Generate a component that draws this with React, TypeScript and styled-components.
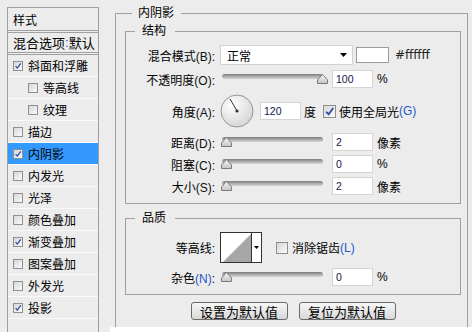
import React from "react";
import styled, { createGlobalStyle } from "styled-components";

const Global = createGlobalStyle`
  html, body { margin: 0; padding: 0; background: #fff; }
  body {
    font-family: "Liberation Sans", "Noto Sans CJK SC", sans-serif;
    font-size: 12px;
    color: #000;
  }
`;

const BG = "#ececec";
const LINE = "#a0a0a0";

const Dialog = styled.div`
  display: flex;
  align-items: flex-start;
  width: 472px;
  height: 332px;
`;

/* ---------- left style list ---------- */
const Sidebar = styled.div`
  flex: none;
  width: 110px;
  height: 332px;
  box-sizing: border-box;
  padding: 7px 0 0 7px;
  background: ${BG};
`;

const StyleList = styled.ul`
  list-style: none;
  margin: 0;
  padding: 0;
  width: 92px;
  height: 325px;
  box-sizing: border-box;
  border: 1px solid ${LINE};
  border-bottom: none;
`;

const ListHeader = styled.li<{ $h: number; $size: number }>`
  display: flex;
  align-items: center;
  height: ${(p) => p.$h}px;
  padding-left: 5px;
  border-bottom: 3px double ${LINE};
  font-size: ${(p) => p.$size}px;
  white-space: nowrap;
`;

const BlueColon = styled.span`
  color: #2458c8;
`;

const ListItem = styled.li<{ $indent?: boolean; $active?: boolean }>`
  display: flex;
  align-items: center;
  gap: 5px;
  height: 21px;
  padding-left: ${(p) => (p.$indent ? 20 : 5)}px;
  border-bottom: 1px solid #fafafa;
  background: ${(p) => (p.$active ? "#3399ff" : "transparent")};
  font-size: 12px;
  white-space: nowrap;
`;

const Box = styled.span<{ $size: number }>`
  flex: none;
  display: inline-flex;
  align-items: center;
  justify-content: center;
  width: ${(p) => p.$size}px;
  height: ${(p) => p.$size}px;
  box-sizing: border-box;
  border: 1px solid #8f8f8f;
  background: linear-gradient(135deg, #d6d6d6, #fbfbfb);
`;

const CheckBox = ({ checked, size }: { checked?: boolean; size: number }) => (
  <Box $size={size}>
    {checked && (
      <svg width={size - 2} height={size - 2} viewBox="0 0 10 10">
        <path d="M2 5.2 L4.2 7.6 L8.4 1.8" fill="none" stroke="#2d49a3" strokeWidth="1.6" />
      </svg>
    )}
  </Box>
);

/* ---------- group boxes ---------- */
const Main = styled.div`
  flex: 1;
  height: 327px;
  box-sizing: border-box;
  padding: 5px 4px 0 5px;
  background: ${BG};
`;

const GroupBox = styled.section<{ $mt?: number; $h?: number }>`
  display: flex;
  flex-direction: column;
  margin-top: ${(p) => p.$mt ?? 0}px;
  ${(p) => (p.$h ? `height: ${p.$h}px;` : "")}
`;

const GroupHead = styled.div<{ $lead: number }>`
  display: flex;
  height: 16px;
  &::before {
    content: "";
    flex: none;
    box-sizing: border-box;
    width: ${(p) => p.$lead}px;
    margin-top: 8px;
    border-top: 1px solid ${LINE};
    border-left: 1px solid ${LINE};
  }
  &::after {
    content: "";
    flex: 1;
    margin-top: 8px;
    border-top: 1px solid ${LINE};
    border-right: 1px solid ${LINE};
  }
`;

const GroupTitle = styled.span<{ $pl: number; $pr: number }>`
  padding: 0 ${(p) => p.$pr}px 0 ${(p) => p.$pl}px;
  line-height: 16px;
  font-size: 12px;
`;

const GroupBody = styled.div<{ $pad: string; $open?: boolean }>`
  flex: 1;
  padding: ${(p) => p.$pad};
  border: 1px solid ${LINE};
  border-top: none;
  ${(p) => (p.$open ? "border-bottom: none;" : "")}
`;

/* ---------- rows & controls ---------- */
const Row = styled.div<{ $h: number; $mt?: number }>`
  display: flex;
  align-items: center;
  height: ${(p) => p.$h}px;
  margin-top: ${(p) => p.$mt ?? 0}px;
  white-space: nowrap;
`;

const Label = styled.span`
  flex: none;
  width: 89px;
  margin-right: 5px;
  text-align: right;
`;

const Key = styled.span<{ $blue?: boolean }>`
  color: ${(p) => (p.$blue ? "#2458c8" : "#111")};
`;

const Select = styled.div`
  flex: none;
  display: flex;
  align-items: center;
  justify-content: space-between;
  width: 133px;
  height: 20px;
  box-sizing: border-box;
  padding: 0 5px 0 6px;
  background: #fff;
  border: 1px solid #d2d2d2;
`;

const Swatch = styled.div`
  flex: none;
  width: 33px;
  height: 16px;
  margin-left: 3px;
  box-sizing: border-box;
  background: #fff;
  border: 1px solid #9c9c9c;
`;

const Hex = styled.span`
  margin-left: 6px;
  font-family: "DejaVu Sans", sans-serif;
  font-size: 12px;
  color: #222;
`;

const Slider = styled.div`
  position: relative;
  flex: none;
  width: 103px;
  height: 18px;
`;

const Track = styled.div`
  width: 101px;
  height: 5px;
  margin: 4px 0 0 2px;
  border-radius: 3px;
  background: linear-gradient(#7b7b7b, #a8a8a8 45%, #d6d6d6);
`;

const ThumbSvg = styled.svg<{ $pos: number }>`
  position: absolute;
  top: 4px;
  left: ${(p) => 1 + p.$pos * 0.96}px;
  width: 11px;
  height: 10px;
`;

const SliderControl = ({ pos, id }: { pos: number; id: string }) => (
  <Slider>
    <Track />
    <ThumbSvg $pos={pos} viewBox="0 0 11 10">
      <defs>
        <linearGradient id={id} x1="0" y1="0" x2="0" y2="1">
          <stop offset="0" stopColor="#f8f8f8" />
          <stop offset="1" stopColor="#c4c4c4" />
        </linearGradient>
      </defs>
      <polygon points="5.5,0.5 10.5,6 10.5,9.5 0.5,9.5 0.5,6" fill={`url(#${id})`} stroke="#7a7a7a" />
    </ThumbSvg>
  </Slider>
);

const Field = styled.div<{ $ml: number }>`
  flex: none;
  display: flex;
  align-items: center;
  width: 41px;
  height: 18px;
  margin-left: ${(p) => p.$ml}px;
  box-sizing: border-box;
  padding-left: 3px;
  background: #fff;
  border: 1px solid #d4d4d4;
  font-size: 10.5px;
  color: #14144a;
`;

const Unit = styled.span<{ $ml: number }>`
  display: inline-flex;
  align-items: center;
  margin-left: ${(p) => p.$ml}px;
`;

const Dial = styled.svg`
  flex: none;
  width: 34px;
  height: 34px;
`;

const Contour = styled.div`
  flex: none;
  display: flex;
  width: 42px;
  height: 31px;
  box-sizing: border-box;
  background: #fff;
  border: 1px solid #333;
`;

const ContourPreview = styled.svg`
  display: block;
  width: 30px;
  height: 29px;
  border-right: 1px solid #333;
`;

const ContourArrow = styled.div`
  flex: 1;
  display: flex;
  align-items: center;
  justify-content: center;
`;

const Buttons = styled.div`
  display: flex;
  justify-content: center;
  gap: 11px;
  margin-top: 7px;
`;

const Button = styled.button`
  display: flex;
  align-items: center;
  justify-content: center;
  width: 97px;
  height: 18px;
  padding: 0;
  border: 1px solid #6a6a6a;
  border-radius: 3px;
  background: linear-gradient(#f7f7f7, #d8d8d8);
  font-family: "Liberation Sans", "Noto Sans CJK SC", sans-serif;
  font-size: 13px;
  color: #000;
`;

const DownArrow = () => (
  <svg width="7" height="4" viewBox="0 0 7 4">
    <polygon points="0,0 7,0 3.5,4" fill="#000" />
  </svg>
);

const items: { label: string; checked?: boolean; indent?: boolean; active?: boolean }[] = [
  { label: "斜面和浮雕", checked: true },
  { label: "等高线", indent: true },
  { label: "纹理", indent: true },
  { label: "描边" },
  { label: "内阴影", checked: true, active: true },
  { label: "内发光" },
  { label: "光泽" },
  { label: "颜色叠加" },
  { label: "渐变叠加", checked: true },
  { label: "图案叠加" },
  { label: "外发光" },
  { label: "投影", checked: true },
];

export default function App() {
  return (
    <>
      <Global />
      <Dialog>
        <Sidebar>
          <StyleList>
            <ListHeader $h={22} $size={12}>样式</ListHeader>
            <ListHeader $h={19} $size={13}>
              混合选项<BlueColon>:</BlueColon>默认
            </ListHeader>
            {items.map((it) => (
              <ListItem key={it.label} $indent={it.indent} $active={it.active}>
                <CheckBox checked={it.checked} size={10} />
                {it.label}
              </ListItem>
            ))}
          </StyleList>
        </Sidebar>

        <Main>
          <GroupBox $h={322}>
            <GroupHead $lead={17}>
              <GroupTitle $pl={6} $pr={7}>内阴影</GroupTitle>
            </GroupHead>
            <GroupBody $pad="2px 6px 0 9px" $open>
              <GroupBox>
                <GroupHead $lead={10}>
                  <GroupTitle $pl={7} $pr={9}>结构</GroupTitle>
                </GroupHead>
                <GroupBody $pad="6px 0 8px 0">
                  <Row $h={20}>
                    <Label>混合模式<Key>(B)</Key>:</Label>
                    <Select>
                      <span>正常</span>
                      <DownArrow />
                    </Select>
                    <Swatch />
                    <Hex>#ffffff</Hex>
                  </Row>
                  <Row $h={18} $mt={5}>
                    <Label>不透明度<Key>(O)</Key>:</Label>
                    <SliderControl pos={100} id="t1" />
                    <Field $ml={9}>100</Field>
                    <Unit $ml={4}>%</Unit>
                  </Row>
                  <Row $h={34} $mt={6}>
                    <Label>角度<Key>(A)</Key>:</Label>
                    <Dial viewBox="0 0 34 34">
                      <defs>
                        <radialGradient id="dialg" cx="0.35" cy="0.3" r="0.8">
                          <stop offset="0" stopColor="#ffffff" />
                          <stop offset="1" stopColor="#d2d2d2" />
                        </radialGradient>
                      </defs>
                      <circle cx="17" cy="17" r="16" fill="url(#dialg)" stroke="#959595" />
                      <line x1="17" y1="17" x2="10" y2="4.9" stroke="#333" strokeWidth="1" />
                      <circle cx="17" cy="17" r="1.6" fill="#333" />
                    </Dial>
                    <Field $ml={6}>120</Field>
                    <Unit $ml={3}>度</Unit>
                    <Unit $ml={7}>
                      <CheckBox checked size={13} />
                    </Unit>
                    <Unit $ml={3}>
                      使用全局光<Key $blue>(G)</Key>
                    </Unit>
                  </Row>
                  <Row $h={18} $mt={5}>
                    <Label>距离<Key>(D)</Key>:</Label>
                    <SliderControl pos={0} id="t2" />
                    <Field $ml={9}>2</Field>
                    <Unit $ml={4}>像素</Unit>
                  </Row>
                  <Row $h={18} $mt={4}>
                    <Label>阻塞<Key>(C)</Key>:</Label>
                    <SliderControl pos={0} id="t3" />
                    <Field $ml={9}>0</Field>
                    <Unit $ml={4}>%</Unit>
                  </Row>
                  <Row $h={18} $mt={4}>
                    <Label>大小<Key>(S)</Key>:</Label>
                    <SliderControl pos={0} id="t4" />
                    <Field $ml={9}>2</Field>
                    <Unit $ml={4}>像素</Unit>
                  </Row>
                </GroupBody>
              </GroupBox>

              <GroupBox $mt={6}>
                <GroupHead $lead={10}>
                  <GroupTitle $pl={7} $pr={9}>品质</GroupTitle>
                </GroupHead>
                <GroupBody $pad="6px 0 8px 0">
                  <Row $h={31}>
                    <Label>等高线:</Label>
                    <Contour>
                      <ContourPreview viewBox="0 0 30 29">
                        <polygon points="2,29 30,1 30,29" fill="#a6a6a6" />
                      </ContourPreview>
                      <ContourArrow>
                        <svg width="5" height="3" viewBox="0 0 5 3">
                          <polygon points="0,0 5,0 2.5,3" fill="#000" />
                        </svg>
                      </ContourArrow>
                    </Contour>
                    <Unit $ml={14}>
                      <CheckBox size={12} />
                    </Unit>
                    <Unit $ml={4}>
                      消除锯齿<Key $blue>(L)</Key>
                    </Unit>
                  </Row>
                  <Row $h={18} $mt={5}>
                    <Label>
                      杂色<Key $blue>(N)</Key>:
                    </Label>
                    <SliderControl pos={0} id="t5" />
                    <Field $ml={9}>0</Field>
                    <Unit $ml={4}>%</Unit>
                  </Row>
                </GroupBody>
              </GroupBox>

              <Buttons>
                <Button>设置为默认值</Button>
                <Button>复位为默认值</Button>
              </Buttons>
            </GroupBody>
          </GroupBox>
        </Main>
      </Dialog>
    </>
  );
}
